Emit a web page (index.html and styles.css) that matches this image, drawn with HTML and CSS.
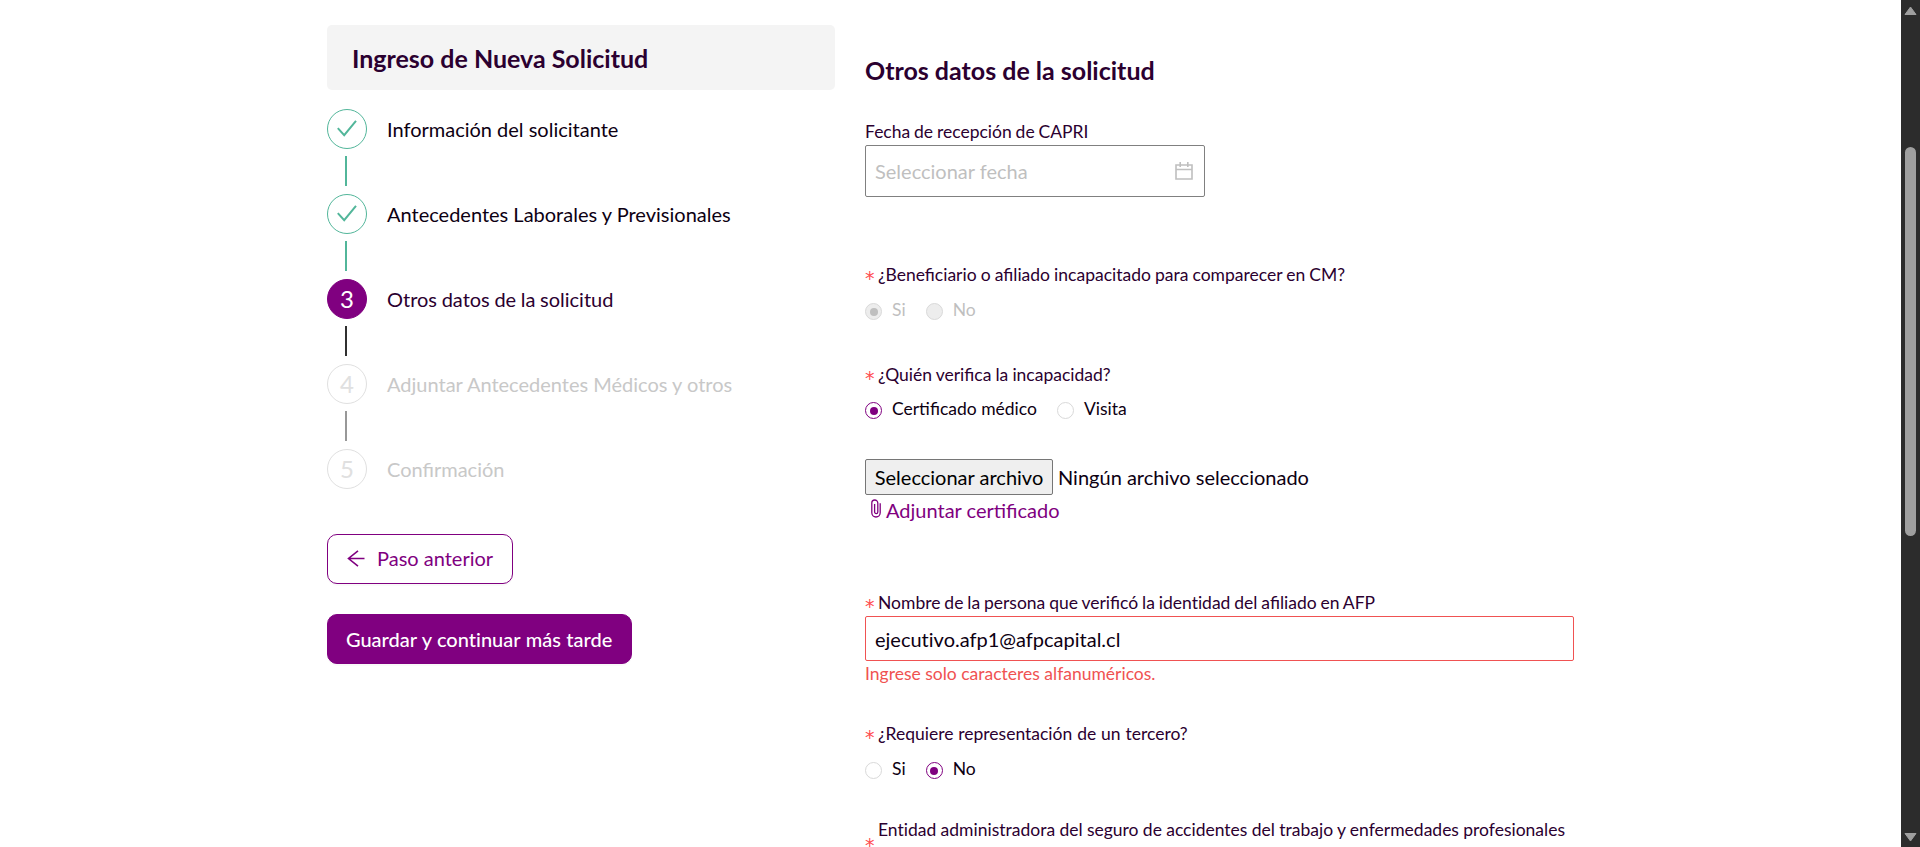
FILE: index.html
```html
<!DOCTYPE html>
<html lang="es">
<head>
<meta charset="utf-8">
<title>Ingreso de Nueva Solicitud</title>
<link rel="stylesheet" href="styles.css">
</head>
<body>
<div class="page">
  <aside class="sidebar">
    <h1 class="sidebar-title">Ingreso de Nueva Solicitud</h1>
    <ol class="steps">
      <li class="step done"><div class="rail"><span class="circle"><svg class="check" viewBox="0 0 20 17"><path d="M.8 8.2 7.2 15.2 19 .8"/></svg></span><span class="line"></span></div><span class="step-name">Información del solicitante</span></li>
      <li class="step done"><div class="rail"><span class="circle"><svg class="check" viewBox="0 0 20 17"><path d="M.8 8.2 7.2 15.2 19 .8"/></svg></span><span class="line"></span></div><span class="step-name">Antecedentes Laborales y Previsionales</span></li>
      <li class="step active"><div class="rail"><span class="circle">3</span><span class="line"></span></div><span class="step-name">Otros datos de la solicitud</span></li>
      <li class="step pending"><div class="rail"><span class="circle">4</span><span class="line"></span></div><span class="step-name">Adjuntar Antecedentes Médicos y otros</span></li>
      <li class="step pending"><div class="rail"><span class="circle">5</span></div><span class="step-name">Confirmación</span></li>
    </ol>
    <button class="btn btn-outline"><svg class="arrow" viewBox="0 0 18 17"><path d="M17.5 8.5H1.5M11 .8 1.5 8.5 11 16.2"/></svg><span>Paso anterior</span></button>
    <button class="btn btn-solid">Guardar y continuar más tarde</button>
  </aside>
  <main class="content">
    <h2 class="content-title">Otros datos de la solicitud</h2>
    <section class="field field-date">
      <div class="label label-tight">Fecha de recepción de CAPRI</div>
      <div class="date-input"><span>Seleccionar fecha</span><svg class="calendar" viewBox="0 0 18 18"><path d="M1 3h16v14H1zM1 7.5h16M5.2 0v5M12.8 0v5"/></svg></div>
    </section>
    <section class="field field-unable">
      <div class="label"><i class="star">*</i>¿Beneficiario o afiliado incapacitado para comparecer en CM?</div>
      <div class="radios disabled"><span class="radio checked"></span><span class="option">Si</span><span class="radio"></span><span class="option">No</span></div>
    </section>
    <section class="field field-who">
      <div class="label"><i class="star">*</i>¿Quién verifica la incapacidad?</div>
      <div class="radios"><span class="radio checked"></span><span class="option">Certificado médico</span><span class="radio"></span><span class="option">Visita</span></div>
    </section>
    <section class="field field-file">
      <div class="file"><button class="file-btn">Seleccionar archivo</button><span>Ningún archivo seleccionado</span></div>
      <a class="attach"><svg class="clip" viewBox="0 0 10 19"><path d="M9.2 4.2v9.6a4.2 4.2 0 0 1-8.4 0V4a3 3 0 0 1 6 0v9a1.6 1.6 0 0 1-3.2 0V5"/></svg>Adjuntar certificado</a>
    </section>
    <section class="field field-name">
      <div class="label label-tight"><i class="star">*</i><span>Nombre de la persona que verificó la <span class="plain">identidad</span> del afiliado en AFP</span></div>
      <div class="text-input">ejecutivo.afp1@afpcapital.cl</div>
      <div class="error">Ingrese solo caracteres alfanuméricos.</div>
    </section>
    <section class="field field-third">
      <div class="label label-wide"><i class="star">*</i>¿Requiere representación de un tercero?</div>
      <div class="radios"><span class="radio"></span><span class="option">Si</span><span class="radio checked"></span><span class="option">No</span></div>
    </section>
    <section class="field field-entity">
      <div class="label label-even"><i class="star star-low">*</i><span class="plain">Entidad administradora del seguro de accidentes del trabajo y enfermedades profesionales</span></div>
    </section>
  </main>
  <div class="scrollbar">
    <svg class="tri" viewBox="0 0 13 10"><path d="M6.5 1 12 8.5H1z"/></svg>
    <div class="thumb"></div>
    <svg class="tri tri-down" viewBox="0 0 13 10"><path d="M6.5 9 12 1.5H1z"/></svg>
  </div>
</div>
</body>
</html>
```
FILE: styles.css
```css
* { box-sizing: border-box; }
body { margin: 0; overflow: hidden; background: #fff; font-family: Lato, sans-serif; font-size: 20px; color: #0d0012; }
svg { fill: none; stroke: currentColor; flex: none; }
.plain { font-variant-ligatures: none; }
.page { display: flex; height: 847px; overflow: hidden; padding-left: 327px; }
.sidebar { width: 508px; padding-top: 25px; flex: none; }
.sidebar-title { margin: 0; height: 65px; padding: 0 25px; border-radius: 5px; background: #f4f4f4; font-size: 25px; line-height: 66px; font-weight: 700; color: #2b0030; }
.steps { list-style: none; margin: 19px 0 45px; padding: 0; }
.step { display: flex; gap: 20px; height: 85px; }
.step:last-child { height: 40px; }
.rail { width: 40px; display: flex; flex-direction: column; }
.circle { width: 40px; height: 40px; border: 1px solid currentColor; border-radius: 50%; display: flex; align-items: center; justify-content: center; font-size: 24px; line-height: 38px; }
.line { width: 2px; height: 30px; margin: 7px 0 0 18px; background: currentColor; }
.check { width: 20px; height: 17px; margin: -2px 1px 0 0; stroke-width: 2; }
.step-name { line-height: 40px; white-space: nowrap; }
.done .rail { color: #52b69a; }
.active .circle { background: #800080; border-color: #800080; color: #fff; }
.active .line { background: #303030; }
.active .step-name { color: #2b0030; word-spacing: -.5px; }
.pending .circle { color: #e0e0e0; }
.pending .line { background: #989898; }
.pending .step-name { color: #c8c8c8; }
.btn { display: flex; align-items: center; height: 50px; padding: 0 19px; border: 1px solid #800080; border-radius: 10px; font: 20px Lato, sans-serif; box-shadow: 0 2px 1px rgba(0,0,0,.025); white-space: nowrap; }
.btn-outline { width: 186px; padding-bottom: 2px; background: #fff; color: #800080; gap: 12px; }
.arrow { width: 18px; height: 17px; stroke-width: 1.6; }
.btn-solid { width: 305px; margin-top: 30px; padding-left: 18px; background: #800080; color: #fff; font-weight: 500; font-variant-ligatures: none; word-spacing: .4px; }
.content { width: 709px; margin-left: 30px; padding-top: 55px; flex: none; }
.content-title { margin: 0; height: 32px; font-size: 25px; line-height: 30px; font-weight: 700; color: #2b0030; }
.label { display: flex; height: 26px; font-size: 17.5px; line-height: 26px; word-spacing: -.4px; color: #2b0030; white-space: nowrap; }
.label-tight { word-spacing: -.6px; }
.label-even { word-spacing: -.15px; }
.label-wide { word-spacing: .4px; }
.star { width: 13px; flex: none; font-family: "DejaVu Sans", sans-serif; font-size: 19px; font-style: normal; line-height: 32px; color: #ff4d4f; }
.field-date { margin-top: 32px; }
.date-input { width: 340px; height: 52px; padding: 0 11px 0 9px; border: 1px solid #808080; border-radius: 2px; display: flex; align-items: center; justify-content: space-between; color: #bfbfbf; }
.calendar { width: 18px; height: 18px; stroke-width: 1.6; }
.field-unable { margin-top: 65px; }
.field-who { margin-top: 34px; }
.field-who .radios { margin-top: 5px; }
.radios { display: flex; align-items: center; height: 34px; margin-top: 6px; font-size: 17.5px; }
.radio { width: 17px; height: 17px; margin-top: 1px; border: 1px solid #d9d9d9; border-radius: 50%; display: flex; align-items: center; justify-content: center; flex: none; }
.option { margin: 0 20px 3px 10px; }
.checked { border-color: #800080; }
.checked::after { content: ""; width: 8px; height: 8px; border-radius: 50%; background: #800080; }
.disabled { color: #bfbfbf; }
.disabled .radio { background: #ededed; border-color: #d9d9d9; }
.disabled .checked::after { background: #bfbfbf; }
.field-file { margin-top: 32px; }
.file { display: flex; align-items: center; gap: 5px; }
.file-btn { width: 188px; height: 36px; padding: 0; border: 1px solid #767676; border-radius: 2px; background: #efefef; font: 20px Lato, sans-serif; color: #000; }
.attach { display: flex; height: 32px; margin-left: 6px; gap: 5px; line-height: 31px; color: #800080; }
.clip { width: 10px; height: 19px; margin-top: 4px; stroke-width: 1.3; }
.field-name { margin-top: 63px; }
.text-input { height: 45px; padding: 0 9px; border: 1px solid #f05252; border-radius: 2px; line-height: 45px; font-variant-ligatures: none; }
.error { font-size: 17.5px; line-height: 26px; height: 26px; color: #f05252; }
.field-third { margin-top: 34px; }
.field-entity { margin-top: 30px; }
.star-low { line-height: 57px; }
.scrollbar { width: 19px; margin-left: auto; flex: none; background: #2c2c2c; display: flex; flex-direction: column; align-items: center; padding: 6px 0 5px; }
.tri { width: 13px; height: 10px; fill: #9f9f9f; stroke: #9f9f9f; stroke-linejoin: round; }
.thumb { width: 11px; height: 389px; margin-top: 131px; border-radius: 6px; background: #9f9f9f; }
.tri-down { margin-top: auto; }
```
